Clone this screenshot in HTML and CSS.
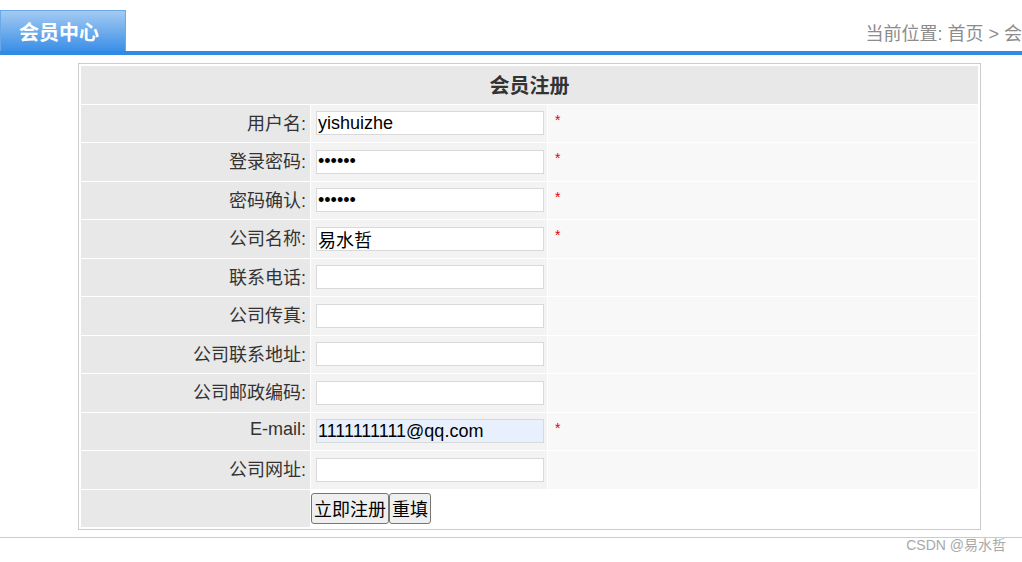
FILE: index.html
```html
<!DOCTYPE html>
<html lang="zh-CN">
<head>
    <meta charset="UTF-8">
    <meta name="viewport" content="width=device-width, initial-scale=1.0">
    <title>会员注册</title>
    <link rel="stylesheet" href="styles.css">
</head>
<body>

<div class="top">
    <div class="tab">会员中心</div>
    <div class="crumb">当前位置: 首页 &gt; 会</div>
</div>

<form class="reg">
    <div class="reg-title">会员注册</div>

    <div class="lbl">用户名:</div>
    <div class="fld"><input type="text" value="yishuizhe"></div>
    <div class="tip"><span class="req">*</span></div>

    <div class="lbl">登录密码:</div>
    <div class="fld"><input type="password" value="123456"></div>
    <div class="tip"><span class="req">*</span></div>

    <div class="lbl">密码确认:</div>
    <div class="fld"><input type="password" value="123456"></div>
    <div class="tip"><span class="req">*</span></div>

    <div class="lbl">公司名称:</div>
    <div class="fld"><input type="text" value="易水哲"></div>
    <div class="tip"><span class="req">*</span></div>

    <div class="lbl">联系电话:</div>
    <div class="fld"><input type="text"></div>
    <div class="tip"></div>

    <div class="lbl">公司传真:</div>
    <div class="fld"><input type="text"></div>
    <div class="tip"></div>

    <div class="lbl">公司联系地址:</div>
    <div class="fld"><input type="text"></div>
    <div class="tip"></div>

    <div class="lbl">公司邮政编码:</div>
    <div class="fld"><input type="text"></div>
    <div class="tip"></div>

    <div class="lbl">E-mail:</div>
    <div class="fld"><input type="text" class="filled" value="1111111111@qq.com"></div>
    <div class="tip"><span class="req">*</span></div>

    <div class="lbl">公司网址:</div>
    <div class="fld"><input type="text"></div>
    <div class="tip"></div>

    <div class="lbl"></div>
    <div class="btns">
        <button type="button">立即注册</button><button type="reset">重填</button>
    </div>
</form>

<div class="foot">
    <span class="mark">CSDN @易水哲</span>
</div>

</body>
</html>
```

FILE: styles.css
```css
body {
    margin: 0;
    font-family: "Liberation Sans", "Noto Sans CJK SC", sans-serif;
    color: #333333;
    background: #ffffff;
    overflow: hidden;
}

.top {
    display: flex;
    justify-content: space-between;
    align-items: flex-end;
    height: 41px;
    padding-top: 10px;
    border-bottom: 4px solid #2e8be6;
}

.tab {
    width: 126px;
    height: 41px;
    box-sizing: border-box;
    padding-left: 18px;
    line-height: 44px;
    color: #ffffff;
    font-size: 20px;
    font-weight: bold;
    background: linear-gradient(#a3cbf2, #3b8fe7);
    border: 1px solid #6aa8e8;
    border-bottom: none;
}

.crumb {
    white-space: nowrap;
    padding-bottom: 6px;
    color: #8c8c8c;
    font-size: 18px;
}

.reg {
    display: grid;
    grid-template-columns: 229px 236px 430px;
    grid-auto-rows: 37.5px;
    gap: 1px;
    width: 897px;
    margin: 8px 0 0 78px;
    padding: 2px;
    border: 1px solid #cccccc;
}

.reg-title {
    grid-column: 1 / 4;
    display: flex;
    align-items: center;
    justify-content: center;
    background: #e8e8e8;
    font-size: 20px;
    font-weight: bold;
}

.lbl {
    display: flex;
    align-items: center;
    justify-content: flex-end;
    padding: 0 4px 3px 0;
    background: #e8e8e8;
    font-size: 18px;
}

.fld {
    display: flex;
    align-items: center;
    padding-left: 5px;
    background: #f3f3f3;
}

.fld input {
    width: 228px;
    height: 24px;
    box-sizing: border-box;
    margin: 0;
    padding: 0 1px;
    border: 1px solid #d9d9d9;
    background: #ffffff;
    font-family: "Liberation Sans", "Noto Sans CJK SC", sans-serif;
    font-size: 18px;
    color: #000000;
    outline: none;
}

.fld input.filled {
    background: #e8f0fe;
}

.tip {
    padding: 6px 0 0 7px;
    background: #f8f8f8;
}

.req {
    color: #e60000;
    font-size: 14px;
}

.btns {
    grid-column: 2 / 4;
    display: flex;
    align-items: center;
    background: #ffffff;
}

.btns button {
    height: 31px;
    margin: 0;
    padding: 0 2px;
    border: 1px solid #767676;
    border-radius: 3px;
    background: #efefef;
    color: #000000;
    font-family: "Noto Sans CJK SC", sans-serif;
    font-size: 18px;
    line-height: 1;
}

.foot {
    margin-top: 7px;
    border-top: 1px solid #cccccc;
    text-align: right;
    padding-right: 16px;
    line-height: 14px;
}

.mark {
    color: #a8a8a8;
    font-size: 14px;
}
```
